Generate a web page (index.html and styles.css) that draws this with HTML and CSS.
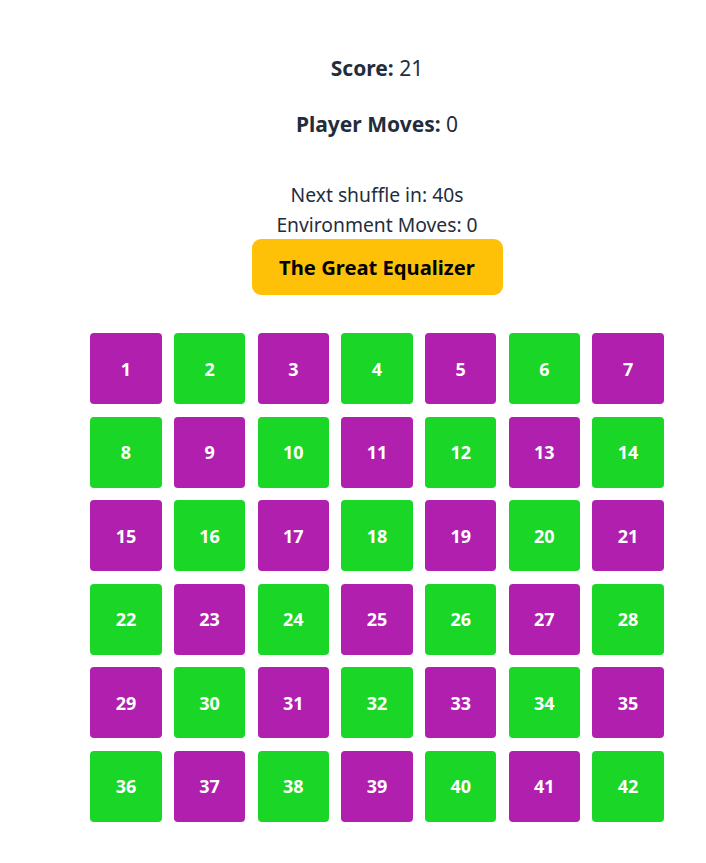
FILE: index.html
```html
<!DOCTYPE html>
<html>
<head>
<meta charset="utf-8">
<link rel="stylesheet" href="styles.css">
</head>
<body>
<div class="app">
  <div class="stat stat-score"><b>Score:</b> 21</div>
  <div class="stat stat-moves"><b>Player Moves:</b> 0</div>
  <div class="info">Next shuffle in: 40s</div>
  <div class="info">Environment Moves: 0</div>
  <button class="equalizer">The Great Equalizer</button>
  <div class="grid">
    <div class="tile p">1</div><div class="tile g">2</div><div class="tile p">3</div><div class="tile g">4</div><div class="tile p">5</div><div class="tile g">6</div><div class="tile p">7</div>
    <div class="tile g">8</div><div class="tile p">9</div><div class="tile g">10</div><div class="tile p">11</div><div class="tile g">12</div><div class="tile p">13</div><div class="tile g">14</div>
    <div class="tile p">15</div><div class="tile g">16</div><div class="tile p">17</div><div class="tile g">18</div><div class="tile p">19</div><div class="tile g">20</div><div class="tile p">21</div>
    <div class="tile g">22</div><div class="tile p">23</div><div class="tile g">24</div><div class="tile p">25</div><div class="tile g">26</div><div class="tile p">27</div><div class="tile g">28</div>
    <div class="tile p">29</div><div class="tile g">30</div><div class="tile p">31</div><div class="tile g">32</div><div class="tile p">33</div><div class="tile g">34</div><div class="tile p">35</div>
    <div class="tile g">36</div><div class="tile p">37</div><div class="tile g">38</div><div class="tile p">39</div><div class="tile g">40</div><div class="tile p">41</div><div class="tile g">42</div>
  </div>
</div>
</body>
</html>
```
FILE: styles.css
```css
html, body {
  margin: 0;
  padding: 0;
  background: #ffffff;
}
body {
  font-family: "Noto Sans", "Open Sans", sans-serif;
  color: #1f2d3d;
}
.app {
  padding-left: 48px;
  padding-top: 52px;
  display: flex;
  flex-direction: column;
  align-items: center;
}
.stat {
  font-size: 21px;
  line-height: 32px;
}
.stat b {
  font-weight: 700;
}
.stat-moves {
  margin-top: 24px;
  margin-bottom: 40px;
}
.info {
  font-size: 19.3px;
  line-height: 30px;
}
.equalizer {
  margin-top: -1px;
  width: 251px;
  height: 56px;
  border: none;
  border-radius: 9px;
  background: #ffc107;
  color: #000;
  font-family: "Noto Sans", sans-serif;
  font-weight: 700;
  font-size: 20.2px;
}
.grid {
  margin-top: 38px;
  display: grid;
  grid-template-columns: repeat(7, 71.5px);
  grid-auto-rows: 71px;
  column-gap: 12.2px;
  row-gap: 12.6px;
}
.tile {
  border-radius: 4px;
  display: flex;
  align-items: center;
  justify-content: center;
  color: #ffffff;
  font-weight: 700;
  font-size: 18px;
}
.tile.p {
  background: #b01fae;
}
.tile.g {
  background: #1ad626;
}
```
